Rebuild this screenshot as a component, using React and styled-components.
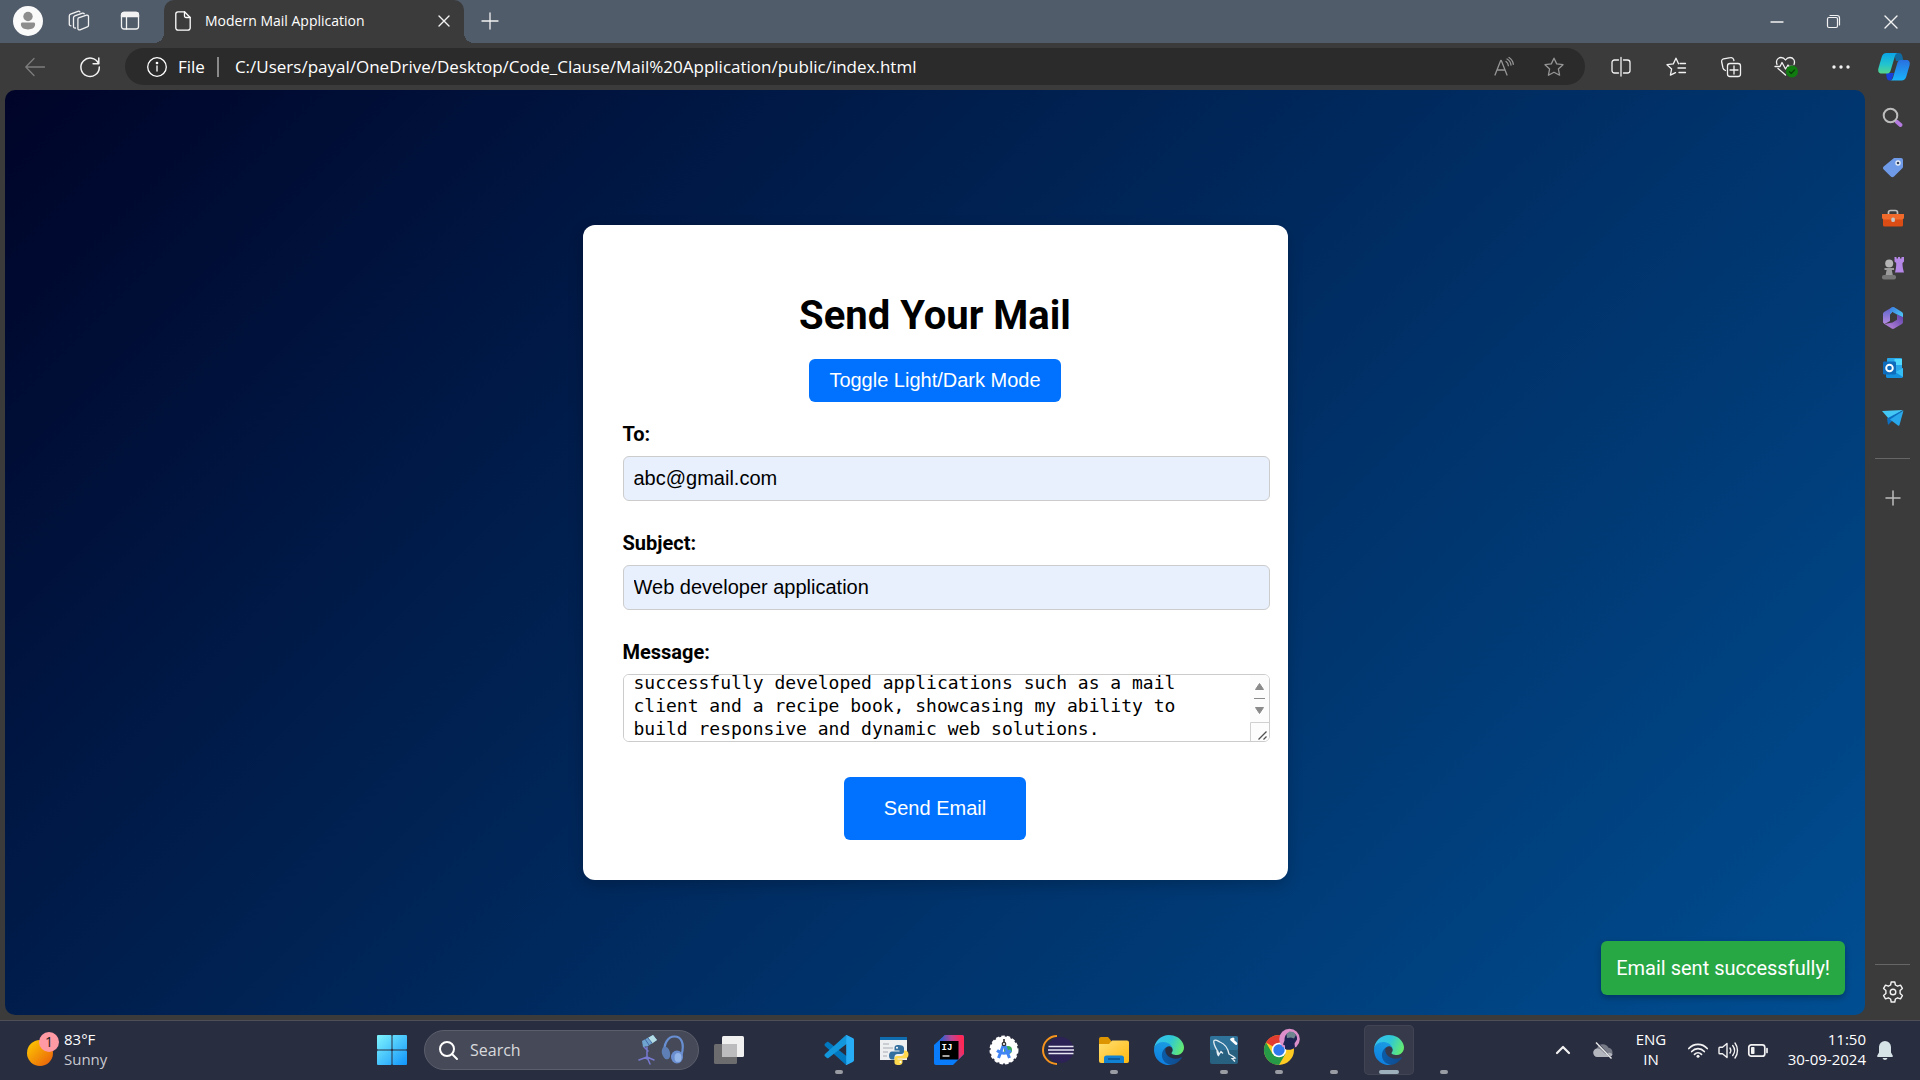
import React, { useEffect, useRef, useState } from "react";
import styled, { createGlobalStyle, css } from "styled-components";

const uiFont = `"Open Sans", "Noto Sans", sans-serif`;
const pageFont = `Roboto, sans-serif`;
const controlFont = `"Liberation Sans", Arial, sans-serif`;

const GlobalStyle = createGlobalStyle`
  *, *::before, *::after { box-sizing: border-box; }
  body { margin: 0; background: #3b3b3b; }
  button { border: 0; padding: 0; background: none; color: inherit; font: inherit; }
  svg { display: block; flex: none; overflow: visible; }
`;

/* ---------- window shell ---------- */

const Desktop = styled.div`
  display: flex;
  flex-direction: column;
  min-height: 100vh;
  font-family: ${uiFont};
  color: #fff;
`;

const TabBar = styled.header`
  display: flex;
  align-items: center;
  height: 43px;
  background: #515c6b;
`;

const TabTools = styled.div`
  display: flex;
  align-items: center;
  width: 164px;
  padding: 0 0 2px 13px;
  gap: 21px;
`;

const IconButton = styled.button`
  display: grid;
  place-items: center;
  flex: none;
  width: ${(p) => p.$w || 30}px;
  height: ${(p) => p.$h || 30}px;
  color: ${(p) => p.$color || "#f2f2f2"};
`;

const Tab = styled.div`
  position: relative;
  display: flex;
  align-items: center;
  width: 300px;
  height: 43px;
  padding: 0 5px 2px 11px;
  border-radius: 10px 10px 0 0;
  background: #3b3b3b;
  &::before,
  &::after {
    content: "";
    position: absolute;
    bottom: 0;
    width: 10px;
    height: 10px;
  }
  &::before {
    right: 100%;
    background: radial-gradient(circle at 0 0, #515c6b 10px, #3b3b3b 10px);
  }
  &::after {
    left: 100%;
    background: radial-gradient(circle at 100% 0, #515c6b 10px, #3b3b3b 10px);
  }
`;

const TabTitle = styled.span`
  flex: 1;
  margin-left: 14px;
  font-size: 14px;
  line-height: 20px;
  white-space: nowrap;
`;

const NewTab = styled(IconButton)`
  margin: 0 0 2px 11px;
`;

const WindowButtons = styled.div`
  display: flex;
  margin-left: auto;
`;

const Toolbar = styled.div`
  display: flex;
  align-items: center;
  height: 47px;
  padding: 0 0 0 7px;
  background: #3b3b3b;
`;

const AddressBar = styled.div`
  display: flex;
  align-items: center;
  flex: 1;
  height: 37px;
  margin-left: 8px;
  padding: 0 6px 0 22px;
  border-radius: 19px;
  background: #2b2b2b;
  font-size: 17px;
  line-height: 24px;
`;

const SchemeLabel = styled.span`
  margin-left: 11px;
  padding-right: 12px;
`;

const AddressInput = styled.input`
  flex: 1;
  min-width: 0;
  height: 24px;
  padding: 0;
  border: 0;
  outline: 0;
  background: none;
  color: #fff;
  font: inherit;
`;

const AddressDivider = styled.span`
  width: 2px;
  height: 20px;
  margin-right: 16px;
  background: #8a8a8a;
`;

const ToolbarActions = styled.div`
  display: flex;
  padding-left: 8px;
`;

const BrowserBody = styled.div`
  display: flex;
  flex: 1;
  padding: 0 0 5px 5px;
  background: #3b3b3b;
`;

const Sidebar = styled.aside`
  display: flex;
  flex-direction: column;
  align-items: center;
  width: 55px;
  padding-top: 3px;
`;

const SideRule = styled.hr`
  width: 35px;
  height: 1px;
  margin: ${(p) => (p.$bottom ? "auto 0 4px" : "15px 0 14px")};
  border: 0;
  background: #666;
`;

/* ---------- mail page ---------- */

const Page = styled.main`
  position: relative;
  display: flex;
  align-items: center;
  justify-content: center;
  flex: 1;
  border-radius: 10px;
  background: linear-gradient(135deg, #000428, #004e92);
  font-family: ${pageFont};
`;

const Card = styled.form`
  display: flex;
  flex-direction: column;
  align-items: center;
  width: 705px;
  padding: 67px 40px 40px;
  border-radius: 12px;
  background: #fff;
  color: #000;
  box-shadow: 0 5px 15px rgba(0, 0, 0, 0.2);
`;

const Title = styled.h1`
  margin: 0 0 20px;
  font-size: 40px;
  line-height: 47px;
  font-weight: 700;
`;

const PrimaryButton = styled.button`
  padding: ${(p) => (p.$large ? "20px 40px" : "10px 20px")};
  border-radius: 6px;
  background: #0072ff;
  color: #fff;
  font-family: ${controlFont};
  font-size: 20px;
  line-height: 23px;
`;

const Fields = styled.div`
  display: flex;
  flex-direction: column;
  gap: 30px;
  width: 100%;
  margin: 20px 0 35px;
`;

const Field = styled.div`
  display: flex;
  flex-direction: column;
  gap: 10px;
`;

const Label = styled.label`
  font-size: 20px;
  line-height: 24px;
  font-weight: 700;
`;

const box = css`
  width: calc(100% + 22px);
  border: 1px solid #ccc;
  border-radius: 6px;
  outline: 0;
  color: #000;
`;

const TextInput = styled.input`
  ${box}
  height: 45px;
  padding: 0 10px;
  background: #e8f0fe;
  font-family: ${controlFont};
  font-size: 20px;
`;

const MessageWrap = styled.div`
  ${box}
  position: relative;
  height: 68px;
  overflow: hidden;
`;

const MessageInput = styled.textarea`
  display: block;
  width: 100%;
  height: 66px;
  padding: 0 30px 1px 10px;
  border: 0;
  outline: 0;
  resize: none;
  overflow: hidden;
  background: #fff;
  color: #000;
  font-family: "DejaVu Sans Mono", monospace;
  font-size: 18px;
  line-height: 23px;
`;

const ScrollTrack = styled.span`
  position: absolute;
  top: 0;
  right: 0;
  bottom: 0;
  width: 19px;
`;

const Toast = styled.div`
  position: absolute;
  right: 20px;
  bottom: 20px;
  padding: 15px;
  border-radius: 6px;
  background: #28a745;
  color: #fff;
  font-size: 20px;
  line-height: 24px;
  box-shadow: 0 3px 6px rgba(0, 0, 0, 0.25);
`;

/* ---------- taskbar ---------- */

const Taskbar = styled.footer`
  display: flex;
  align-items: center;
  height: 60px;
  padding-bottom: 1px;
  border-top: 1px solid #4e4f57;
  background: #292d40;
  font-size: 15px;
  line-height: 20px;
`;

const Weather = styled.button`
  display: flex;
  align-items: center;
  width: 367px;
  padding-left: 27px;
  gap: 5px;
  text-align: left;
`;

const WeatherText = styled.span`
  padding-bottom: 2px;
`;

const Line = styled.span`
  display: block;
  color: ${(p) => (p.$muted ? "#c9cad0" : "#fff")};
`;

const TaskItems = styled.nav`
  display: flex;
  align-items: center;
  gap: 5px;
`;

const TaskButton = styled.button`
  position: relative;
  display: grid;
  place-items: center;
  width: 50px;
  height: 50px;
  border-radius: 5px;
  ${(p) => p.$active && "background: #363a4a; box-shadow: inset 0 0 0 1px #414553;"}
  &::after {
    content: "";
    position: absolute;
    bottom: 1px;
    width: ${(p) => (p.$active ? 20 : 8)}px;
    height: 4px;
    border-radius: 2px;
    background: ${(p) => (p.$active ? "#9fb0bd" : p.$running ? "#9a9ca3" : "transparent")};
  }
`;

const SearchBox = styled.label`
  display: flex;
  align-items: center;
  width: 275px;
  height: 40px;
  margin: 0 0 0 2px;
  padding: 0 13px 0 14px;
  border: 1px solid #5b5f6c;
  border-radius: 20px;
  background: #464a58;
`;

const SearchInput = styled.input`
  flex: 1;
  min-width: 0;
  margin-left: 12px;
  padding: 0;
  border: 0;
  outline: 0;
  background: none;
  color: #d8d9dd;
  font-family: inherit;
  font-size: 16px;
  &::placeholder { color: #d8d9dd; opacity: 1; }
`;

const Tray = styled.div`
  display: flex;
  align-items: center;
  margin-left: auto;
  padding-right: 20px;
`;

const Language = styled.button`
  width: 56px;
  margin-right: 4px;
  padding-bottom: 2px;
  text-align: center;
`;

const Clock = styled.button`
  width: 90px;
  margin: 0 4px 0 3px;
  padding-bottom: 2px;
  text-align: right;
  white-space: nowrap;
`;

/* ---------- icons ---------- */

const Svg = ({ s = 20, w, h, box: vb, children, sw = 1.3 }) => (
  <svg
    width={w || s}
    height={h || s}
    viewBox={vb || `0 0 ${w || s} ${h || s}`}
    fill="none"
    stroke="currentColor"
    strokeWidth={sw}
    strokeLinecap="round"
    strokeLinejoin="round"
    aria-hidden="true"
  >
    {children}
  </svg>
);

const AvatarIcon = () => (
  <Svg s={30}>
    <circle cx="15" cy="15" r="15" fill="#fafafa" stroke="none" />
    <circle cx="15" cy="10.5" r="4.7" fill="#8d8d8d" stroke="none" />
    <path d="M9.5 16.5h11c1 0 1.6.6 1.6 1.6 0 4-3.300 5.400-7.100 5.400S7.900 22.100 7.900 18.100c0-1 .6-1.600 1.600-1.600z" fill="#8d8d8d" stroke="none" />
  </Svg>
);

const WorkspacesIcon = () => (
  <Svg s={22}>
    <path d="M10.500 7.800 18.500 5.200c1-.3 2 .3 2 1.400v8.600c0 .8-.4 1.400-1.200 1.700l-7.300 2.900c-1 .4-2.100-.2-2.100-1.300V9.600c0-.9.100-1.500.6-1.800z" />
    <path d="M7.500 18c-1.200.2-2-.5-2-1.600V7.800c0-.9.500-1.600 1.300-1.900l7.700-2.700c.7-.2 1.400 0 1.800.6" />
    <path d="M3 15.800c-1 0-1.700-.6-1.700-1.600V6c0-.9.500-1.500 1.200-1.800L10 1.300c.8-.3 1.500 0 1.900.6" />
  </Svg>
);

const TabActionsIcon = () => (
  <Svg s={20}>
    <rect x="1.500" y="1.500" width="17" height="16.500" rx="2.500" />
    <path d="M1.500 5.500V4A2.500 2.500 0 0 1 4 1.500h12A2.500 2.500 0 0 1 18.500 4v1.500z" fill="currentColor" />
    <path d="M6.500 6v12" />
  </Svg>
);

const DocIcon = () => (
  <Svg w={16} h={20}>
    <path d="M3 .8h6.500L15.200 6.500V17A2.200 2.200 0 0 1 13 19.200H3A2.200 2.200 0 0 1 .8 17V3A2.200 2.200 0 0 1 3 .8z" />
    <path d="M9.500.8V5c0 .9.600 1.500 1.500 1.500h4.200" />
  </Svg>
);

const CrossIcon = ({ s = 10 }) => (
  <Svg s={s} sw={1.400}>
    <path d={`M0 0L${s} ${s}M${s} 0L0 ${s}`} />
  </Svg>
);

const PlusIcon = ({ s = 16, sw = 1.300 }) => (
  <Svg s={s} sw={sw}>
    <path d={`M${s / 2} 0V${s}M0 ${s / 2}H${s}`} />
  </Svg>
);

const MinimizeIcon = () => (
  <Svg w={12} h={12}><path d="M0 6h12" /></Svg>
);

const RestoreIcon = () => (
  <Svg s={13} sw={1.200}>
    <rect x=".5" y="2.500" width="10" height="10" rx="1.500" />
    <path d="M3 .5h7a2.500 2.500 0 0 1 2.500 2.500v7" />
  </Svg>
);

const BackIcon = () => (
  <Svg s={20}><path d="M19.500 10H.8M9 1.500.8 10 9 18.500" /></Svg>
);

const ReloadIcon = () => (
  <Svg s={20} sw={1.500}>
    <path d="M18.500 6.500A9.200 9.200 0 1 0 19.300 10M18.800 1v5.700h-5.700" />
  </Svg>
);

const InfoIcon = () => (
  <Svg s={20} sw={1.300}>
    <circle cx="10" cy="10" r="9.300" />
    <path d="M10 9v5" />
    <circle cx="10" cy="6" r=".7" fill="currentColor" />
  </Svg>
);

const ReadAloudIcon = () => (
  <Svg s={20}>
    <path d="M1 18 6.700 3.500h.6L13 18M3.200 13h7.600" />
    <path d="M12 4.500c1.400 1 2.200 2.400 2.400 4.200M13 2c2.400 1.300 3.700 3.400 4 6M15 .5c2.500 1.600 4 3.900 4.300 6.800" />
  </Svg>
);

const StarIcon = () => (
  <Svg s={20}>
    <path d="M10 1.200l2.700 5.700 6.300.8-4.600 4.300 1.200 6.200L10 15.200l-5.600 3 1.200-6.200L1 7.700l6.300-.8z" />
  </Svg>
);

const SplitIcon = () => (
  <Svg s={20}>
    <path d="M7.500 3H3.500A2.500 2.500 0 0 0 1 5.500v8A2.500 2.500 0 0 0 3.500 16h4M12.500 3h4A2.500 2.500 0 0 1 19 5.500v8a2.500 2.500 0 0 1-2.500 2.500h-4M10 .5v18.500" />
  </Svg>
);

const FavoritesIcon = () => (
  <Svg s={20}>
    <path d="M12.500 6.800 10 1.200 7.300 6.900 1 7.700l4.600 4.300-1.200 6.200L9.500 15.600" />
    <path d="M14 6.500h5.500M12 11h7.500M13 15.500h6.500" />
  </Svg>
);

const CollectionsIcon = () => (
  <Svg s={20}>
    <path d="M4.500 13.500C3 13 2.300 12.200 2 11L.700 5C.3 3.500 1.200 2.200 2.600 1.900L9.500.7c1.500-.3 2.800.5 3.200 2l.2 1" />
    <rect x="6.500" y="6.500" width="13" height="13" rx="2.500" />
    <path d="M13 9v8M9 13h8" />
  </Svg>
);

const EssentialsIcon = () => (
  <Svg s={22}>
    <path d="M2 8.500C.4 4.500 3 1.500 6 1.500c2 0 3.500 1 4.500 2.500C11.500 2.500 13 1.500 15 1.500c3 0 5.600 3 4 7M3 12.500l7.500 6.500" />
    <path d="M0 10.500h5l2-4 3.500 6.500 2.500-4 1 1.500h4" />
    <circle cx="17" cy="15.500" r="6" fill="#107c10" stroke="none" />
    <path d="M14.500 15.700l1.700 1.800 3.300-3.500" stroke="#0a3d0a" />
  </Svg>
);

const DotsIcon = () => (
  <Svg w={18} h={4}>
    <g fill="currentColor" stroke="none">
      <circle cx="2" cy="2" r="1.700" /><circle cx="9" cy="2" r="1.700" /><circle cx="16" cy="2" r="1.700" />
    </g>
  </Svg>
);

const CopilotIcon = () => (
  <svg width="32" height="28" viewBox="0 0 32 28" aria-hidden="true">
    <defs>
      <linearGradient id="cpA" x1="0" y1="0" x2="0" y2="1">
        <stop offset="0" stopColor="#0aa5e8" /><stop offset=".55" stopColor="#22c3cf" /><stop offset="1" stopColor="#55d68b" />
      </linearGradient>
      <linearGradient id="cpB" x1="0" y1="0" x2="0" y2="1">
        <stop offset="0" stopColor="#2a6fe0" /><stop offset="1" stopColor="#18b4fb" />
      </linearGradient>
    </defs>
    <path d="M16 0h5c2 0 2.800 1.500 3.400 3.500L25.500 8H18z" fill="#116aa0" />
    <path d="M8 20h8l-2 6c-.5 1-1.500 1.500-2.500 1.500-2 0-2.500-1.500-3-3.500z" fill="#1741d8" />
    <path d="M8.500 0H20c-1.800 0-2.600 1.500-3.200 3.500l-4 13.500c-.6 2-1.500 3.500-3.500 3.500H3.500C.5 20.500-.3 18 .5 15L3.700 4C4.500 1.500 6 0 8.500 0z" fill="url(#cpA)" />
    <path d="M23.500 27.500H12c1.800 0 2.600-1.500 3.200-3.500l4-13.500c.6-2 1.500-3.500 3.500-3.500h5.800c3 0 3.800 2.500 3 5.500l-3.200 11c-.8 2.500-2.300 4-4.800 4z" fill="url(#cpB)" />
  </svg>
);

const sideIcons = [
  ["Search", (
    <svg width="22" height="22" viewBox="0 0 22 22">
      <path d="M14.500 14.500l4 3.500" stroke="#b57be0" strokeWidth="4" strokeLinecap="round" />
      <circle cx="8.500" cy="8.500" r="6.800" fill="none" stroke="#bdbdbd" strokeWidth="2" />
    </svg>
  )],
  ["Shopping", (
    <svg width="22" height="22" viewBox="0 0 22 22">
      <path d="M12 1h7a2 2 0 0 1 2 2v6.500c0 .8-.2 1.300-.7 1.800L12 19.600c-1 1-2.200 1-3.200 0L1.700 12.500c-1-1-1-2 0-3z" fill="#6f9ae8" />
      <circle cx="16" cy="6" r="2.700" fill="#e8eef8" /><circle cx="16" cy="6" r="1.300" fill="#34415e" />
    </svg>
  )],
  ["Tools", (
    <svg width="22" height="18" viewBox="0 0 22 18">
      <path d="M6.500 6V3.500a2 2 0 0 1 2-2h5a2 2 0 0 1 2 2V6" fill="none" stroke="#bdbdbd" strokeWidth="1.700" />
      <rect x="1" y="6" width="20" height="11.500" rx="1.500" fill="#dc4d16" />
      <path d="M0 5h22v3.500c0 1-1 2-2 2H2c-1 0-2-1-2-2z" fill="#f06a2b" />
      <rect x="9.300" y="8.500" width="3.600" height="4.500" rx="1.500" fill="#c5c5c5" />
    </svg>
  )],
  ["Games", (
    <svg width="22" height="23" viewBox="0 0 22 23">
      <path d="M12.500 0h2v1.500H16V0h2v1.500h1.500V0H22v4.500l-1.500 1.500c0 3 .3 5.500 1.500 9.500h-9c1-4 1.300-6.500 1.200-9.500l-1.700-1.500z" fill="#b588e8" />
      <circle cx="7.200" cy="6.500" r="4" fill="#b5b5b5" />
      <path d="M2.500 11h9.500v2H9.800l1 5H3.600l1-5H2.500z" fill="#9c9c9c" />
      <rect x="0" y="18" width="14" height="4.500" rx="2" fill="#777" />
    </svg>
  )],
  ["Microsoft 365", (
    <svg width="20" height="22" viewBox="0 0 20 22">
      <defs>
        <linearGradient id="m3a" x1="0" y1="0" x2="0" y2="1"><stop offset="0" stopColor="#5a63c8" /><stop offset="1" stopColor="#b48be0" /></linearGradient>
        <linearGradient id="m3b" x1="0" y1="0" x2="1" y2="1"><stop offset="0" stopColor="#3a7be0" /><stop offset="1" stopColor="#4fd0f5" /></linearGradient>
        <linearGradient id="m3c" x1="1" y1="0" x2="0" y2="1"><stop offset="0" stopColor="#5a3fa8" /><stop offset="1" stopColor="#c08be0" /></linearGradient>
      </defs>
      <path d="M9 .3 1.500 4.700C.5 5.300 0 6 0 7v8.500l1.500 1.500L7 14V7l2-1.200z" fill="url(#m3a)" />
      <path d="M9 .3c.7-.4 1.500-.4 2.200 0l7.300 4.400c1 .6 1.500 1.300 1.500 2.300v4L14 7.500l-5-2.700-2 3V2z" fill="url(#m3b)" />
      <path d="M20 9v6c0 1-.5 1.700-1.500 2.300l-7.300 4.300c-.8.500-1.700.5-2.500 0L1.500 17l8-1.500 4.500-2.700V7.500L20 10z" fill="url(#m3c)" />
    </svg>
  )],
  ["Outlook", (
    <svg width="20" height="20" viewBox="0 0 20 20">
      <rect x="4" y="0" width="15" height="13" rx="1" fill="#28a8ea" /><rect x="11.500" y="1" width="7.500" height="6" fill="#50d9ff" />
      <path d="M3 10l9 4 8-4v8.500c0 .8-.7 1.500-1.500 1.500h-14C3.700 20 3 19.300 3 18.500z" fill="#1490df" /><path d="M20 10v9L12 14z" fill="#35bdf5" />
      <rect x="0" y="3.500" width="13" height="13" rx="1.200" fill="#0f6cbd" />
      <circle cx="6.500" cy="10" r="3.300" fill="none" stroke="#fff" strokeWidth="1.900" />
    </svg>
  )],
  ["Drop", (
    <svg width="22" height="16" viewBox="0 0 22 16">
      <path d="M0 1 21 0 7 9z" fill="#43c7f4" /><path d="M21 0 5 8.500l1 6.500z" fill="#0c6fc0" />
      <path d="M21.500.5 8 9.500l8 6c.8.500 1.200.3 1.500-.5z" fill="#28a8ea" />
    </svg>
  )],
];

const GearIcon = () => (
  <Svg s={22} box="0 0 22 22" sw={1.400}>
    <path d="M9.200 1h3.600l.6 3 2.200 1.200 2.900-1 1.900 3.200L18.100 9.500v3l2.300 2.100-1.900 3.200-2.900-1-2.200 1.200-.6 3H9.200l-.6-3-2.200-1.200-2.900 1-1.900-3.200 2.300-2.100v-3L1.600 7.400l1.900-3.200 2.900 1L8.600 4z" />
    <circle cx="11" cy="11" r="2.800" />
  </Svg>
);

const SunIcon = () => (
  <svg width="32" height="34" viewBox="0 0 32 34" aria-hidden="true">
    <defs>
      <linearGradient id="sun" x1="0" y1="0" x2="1" y2="1">
        <stop offset="0" stopColor="#ffd000" /><stop offset="1" stopColor="#e8590c" />
      </linearGradient>
    </defs>
    <circle cx="13" cy="20" r="13" fill="url(#sun)" />
    <circle cx="22" cy="9" r="10" fill="#ff99a4" />
    <text x="22" y="14" textAnchor="middle" fontSize="14" fill="#1b1b1b" fontFamily="Open Sans, sans-serif">1</text>
  </svg>
);

const StartIcon = () => (
  <svg width="30" height="30" viewBox="0 0 30 30" aria-hidden="true">
    <defs>
      <linearGradient id="win" gradientUnits="userSpaceOnUse" x1="0" y1="0" x2="30" y2="30">
        <stop offset="0" stopColor="#7ff4fd" /><stop offset="1" stopColor="#1094fb" />
      </linearGradient>
    </defs>
    <g fill="url(#win)">
      <rect x="0" y="0" width="14.500" height="14.500" rx="1" /><rect x="15.500" y="0" width="14.500" height="14.500" rx="1" />
      <rect x="0" y="15.500" width="14.500" height="14.500" rx="1" /><rect x="15.500" y="15.500" width="14.500" height="14.500" rx="1" />
    </g>
  </svg>
);

const MagnifierIcon = () => (
  <Svg s={19} sw={2}><circle cx="8" cy="8" r="7" /><path d="M13 13l5 5" /></Svg>
);

const PodcastIcon = () => (
  <svg width="48" height="30" viewBox="0 0 48 30" aria-hidden="true">
    <path d="M10 12v12M10 22l-8 3M10 22l7 3M10 22l3 7M7 12l4 4" stroke="#7779d0" strokeWidth="1.500" fill="none" strokeLinecap="round" />
    <path d="M5 6 16 0l4 5-9 6-5 1z" fill="#6fa3d0" /><path d="M11 3 16 0l4 5-5 3.500z" fill="#b2dce6" />
    <path d="M8 4l4 6M11 3l4 5" stroke="#4469a5" />
    <path d="M28 18C26 9 31 1.500 37.500 1.500S48 8 44.500 20" stroke="#678fd2" strokeWidth="2.200" fill="none" />
    <ellipse cx="29" cy="18" rx="4" ry="6.500" fill="#5e7fb5" transform="rotate(-15 29 18)" />
    <ellipse cx="40" cy="22" rx="6" ry="6.500" fill="#6b8ed0" /><ellipse cx="41" cy="22.500" rx="3.500" ry="4.500" fill="#93b4e6" />
  </svg>
);

const TaskViewIcon = () => (
  <svg width="30" height="28" viewBox="0 0 30 28" aria-hidden="true">
    <rect x="0" y="8" width="23" height="20" rx="1.500" fill="#6c6c6e" />
    <rect x="8" y="0" width="22" height="21" rx="1.500" fill="#f0f0f1" />
    <path d="M8 8h15v13H9.500A1.500 1.500 0 0 1 8 19.500z" fill="#bcbcbe" />
  </svg>
);

const VsCodeIcon = () => (
  <svg width="30" height="30" viewBox="0 0 30 30" aria-hidden="true">
    <path d="M1.200 8.500 3 7c.5-.4 1-.4 1.500 0L25 23l-3.500 6.500L1 11c-.8-.8-.6-1.800.2-2.500z" fill="#0078c0" />
    <path d="M1.200 21.500 3 23c.5.400 1 .4 1.500 0L25 7 21.500.5 1 19c-.8.800-.6 1.800.2 2.500z" fill="#1296dc" />
    <path d="M21.500.3c.5-.3 1-.3 1.600 0L28.700 3c.9.400 1.300 1 1.300 1.900v20.200c0 .9-.4 1.500-1.300 1.900l-5.600 2.700c-.6.300-1.100.3-1.600 0 .5-.2.700-.7.700-1.400V1.700c0-.7-.2-1.200-.7-1.400z" fill="#27adf5" />
  </svg>
);

const PythonIdleIcon = () => (
  <svg width="30" height="30" viewBox="0 0 30 30" aria-hidden="true">
    <rect x="1" y="2" width="27" height="23" fill="#edeff0" /><rect x="1" y="2" width="27" height="3" fill="#0f6cae" />
    <path d="M4 9h6M4 13h10M4 17h5M4 21h4" stroke="#bfc4c8" strokeWidth="1.300" />
    <path d="M19.500 10c-3.500 0-4 1.500-4 3v2.500h5v1H13c-2 0-3 1.800-3 4.200 0 2.300 1 3.800 3 3.800h2.500v-2.500c0-2 1.500-3 3-3h4c1.700 0 2.500-1 2.500-2.500V13c0-2-2-3-5.500-3z" fill="#34709f" />
    <circle cx="18" cy="12.700" r="1" fill="#fff" />
    <path d="M19.500 30c3.500 0 4-1.500 4-3v-2.500h-5v-1h7.500c2 0 3.500-1.500 3.500-4s-1.500-4-3.500-4h-1v2.500c0 2-1.500 3-3 3h-4c-1.700 0-2.500 1-2.500 2.500V27c0 2 .5 3 4 3z" fill="#ffd94d" />
    <circle cx="21.500" cy="27" r="1" fill="#fff" />
  </svg>
);

const IntelliJIcon = () => (
  <svg width="30" height="30" viewBox="0 0 30 30" aria-hidden="true">
    <defs>
      <linearGradient id="ij" gradientUnits="userSpaceOnUse" x1="9" y1="8" x2="27" y2="4">
        <stop offset="0" stopColor="#3d5cc8" /><stop offset=".5" stopColor="#b94694" /><stop offset="1" stopColor="#fe2857" />
      </linearGradient>
    </defs>
    <path d="M11 0h17a2 2 0 0 1 2 2v17L19 30H2a2 2 0 0 1-2-2V10z" fill="#087cfa" />
    <path d="M11 0h17a2 2 0 0 1 2 2v17l-6 6V6H5z" fill="url(#ij)" />
    <rect x="6" y="6" width="18.500" height="18.500" fill="#000" />
    <text x="7.500" y="14.500" fontSize="9" fontWeight="700" fontFamily="Liberation Mono, monospace" fill="#fff">IJ</text>
    <path d="M8.500 21h7" stroke="#fff" strokeWidth="1.300" />
  </svg>
);

const AndroidStudioIcon = () => (
  <svg width="30" height="30" viewBox="0 0 30 30" aria-hidden="true">
    <circle cx="15" cy="15" r="13.500" fill="#fff" stroke="#fff" strokeWidth="2" strokeDasharray="3.500 2" />
    <circle cx="19" cy="15" r="4" fill="#34a853" />
    <path d="M15 8.500 9.500 23M15 8.500 20.500 23M8 15.500c4.500 3.500 9.500 3.500 14 0" stroke="#4285f4" strokeWidth="3" fill="none" />
    <path d="M15 4v5" stroke="#555" strokeWidth="2" /><circle cx="15" cy="9" r="1.700" fill="#fff" stroke="#333" strokeWidth="1.300" />
  </svg>
);

const EclipseIcon = () => (
  <svg width="30" height="30" viewBox="0 0 30 30" aria-hidden="true">
    <path d="M13 1A14 14 0 0 0 13 29" stroke="#f7941e" strokeWidth="2" fill="none" />
    <circle cx="16.500" cy="15" r="13" fill="#2c2255" />
    <path d="M4.500 11.500h25M4 15h26M4.500 18.500h25" stroke="#e8e6f2" strokeWidth="1.700" />
  </svg>
);

const FolderIcon = () => (
  <svg width="30" height="26" viewBox="0 0 30 26" aria-hidden="true">
    <defs>
      <linearGradient id="fold" x1="0" y1="0" x2="1" y2="1">
        <stop offset="0" stopColor="#ffdf73" /><stop offset="1" stopColor="#ffb90f" />
      </linearGradient>
    </defs>
    <path d="M0 2a2 2 0 0 1 2-2h7l3 3.500V9H0z" fill="#dc9500" />
    <path d="M0 7h10l3-3.500h15a2 2 0 0 1 2 2V24a2 2 0 0 1-2 2H2a2 2 0 0 1-2-2z" fill="url(#fold)" />
    <path d="M5 26v-5a2.500 2.500 0 0 1 2.500-2.500h15A2.500 2.500 0 0 1 25 21v5z" fill="#1182d2" /><path d="M9 22h12" stroke="#084f8a" strokeWidth="1.500" />
  </svg>
);

const EdgeIcon = ({ id }) => (
  <svg width="30" height="30" viewBox="0 0 256 256" aria-hidden="true">
    <defs>
      <linearGradient id={`${id}a`} x1=".2" y1=".5" x2="1" y2=".5"><stop offset="0" stopColor="#0c59a4" /><stop offset="1" stopColor="#114a8b" /></linearGradient>
      <linearGradient id={`${id}b`} x1=".6" y1="0" x2=".3" y2="1"><stop offset="0" stopColor="#1b9de2" /><stop offset="1" stopColor="#0d7de0" /></linearGradient>
      <linearGradient id={`${id}c`} x1="0" y1=".3" x2="1" y2=".6"><stop offset="0" stopColor="#35c1f1" /><stop offset=".5" stopColor="#2fc7d7" /><stop offset="1" stopColor="#66eb6e" /></linearGradient>
    </defs>
    <path d="M231 190.500c-3.400 1.800-6.900 3.400-10.500 4.700-11.500 4.300-23.600 6.500-35.900 6.500-47.300 0-88.500-32.500-88.500-74.300 0-11.400 6.400-21.900 16.400-27.300-42.800 1.800-53.800 46.400-53.800 72.500 0 73.900 68.100 81.400 82.800 81.400 7.900 0 19.800-2.300 27-4.600l1.300-.4c27.600-9.500 51-28.100 66.600-52.800 1.200-1.900.6-4.300-1.200-5.500-1.300-.8-2.900-.9-4.200-.2z" fill={`url(#${id}a)`} />
    <path d="M105.700 241.400c-8.900-5.500-16.600-12.800-22.700-21.300-26.300-36-18.400-86.500 17.600-112.800 3.800-2.700 7.700-5.200 11.900-7.200 3.100-1.500 8.400-4.100 15.500-4 10.100.1 19.600 4.900 25.700 13 4 5.400 6.300 11.900 6.400 18.700 0-.2 24.500-79.600-80-79.600-43.900 0-80 41.700-80 78.200-.2 19.300 4 38.500 12.100 56 27.600 58.800 94.800 87.600 156.400 67.100-21.100 6.600-44.100 3.700-62.900-8.100z" fill={`url(#${id}b)`} />
    <path d="M152.300 148.900c-.9 1-3.400 2.500-3.400 5.600 0 2.600 1.700 5.200 4.800 7.300 14.300 10 41.400 8.600 41.500 8.600 10.700 0 21.100-2.900 30.300-8.300 18.800-11 30.400-31.100 30.400-52.900.3-22.400-8-37.300-11.300-43.900C223.500 23.900 177.700 0 128 0 58 0 1 56.200 0 126.200c.5-36.500 36.800-66 80-66 3.500 0 23.500.3 42 10.100 16.300 8.600 24.900 18.900 30.800 29.200 6.200 10.700 7.300 24.100 7.300 29.500 0 5.300-2.700 13.300-7.800 19.900z" fill={`url(#${id}c)`} />
  </svg>
);

const MySqlIcon = () => (
  <svg width="30" height="30" viewBox="0 0 30 30" aria-hidden="true">
    <rect x="1" y="1" width="28" height="28" rx="2" fill="#286180" />
    <rect x="1" y="1" width="28" height="14" rx="2" fill="#30739a" />
    <path d="M10 21c-2-1-2-4-2-6-2-3-4-8-3-9.500C6.500 4 9 6 11 7c5 2 8 7 9 12 2 1 4 2 6 4l-3 .500 3 3M8.500 15.500l1.500 4 2-3 2 2" stroke="#e5eef3" strokeWidth="1.300" fill="none" />
    <path d="M22.500 4.500l4.500 4" stroke="#fff" strokeWidth="2.700" strokeLinecap="round" /><circle cx="24" cy="4" r="1.500" fill="#fff" />
  </svg>
);

const ChromeIcon = () => (
  <svg width="30" height="30" viewBox="0 0 30 30" aria-hidden="true">
    <circle cx="15" cy="15" r="15" fill="#ffca22" />
    <path d="M15 15 2 7.500A15 15 0 0 1 28 7.500H15z" fill="#e23c31" />
    <path d="M2 7.500A15 15 0 0 0 15 30l6.500-11.300L15 15 8.500 18.700z" fill="#279a48" />
    <circle cx="15" cy="15" r="7.300" fill="#fff" /><circle cx="15" cy="15" r="5.700" fill="#3079ec" />
    <circle cx="25.500" cy="4" r="10.300" fill="#dc8fcb" />
    <path d="M21 14V10.500l-2-1 1.500-4C20.500 0 23-2.500 27-2.500c4 0 6.500 3 6 7l-2.500 4 .5 4c-3 2.500-7 3-10 1.500z" fill="#1e2452" />
    <path d="M22.500-1l3-2.500 4 .5 2.500 3-2 3.500-3-1-4 .5z" fill="#6e8590" />
  </svg>
);

const ChevronIcon = () => (
  <Svg w={14} h={8} sw={2.200}><path d="M1 7l6-6 6 6" /></Svg>
);

const CloudOffIcon = () => (
  <svg width="21" height="17" viewBox="0 0 21 17" aria-hidden="true">
    <path d="M4.500 15a4.300 4.300 0 0 1-.6-8.500A6.300 6.300 0 0 1 15.500 5.800 4.700 4.700 0 0 1 16 15z" fill="#767a86" />
    <path d="M4.500 15a4.200 4.200 0 0 1 0-8.400c3.500 0 5 3.400 8 5.400 2.500-1.800 5-1.500 7 .3-.6 1.700-1.900 2.700-3.500 2.700z" fill="#b4b6bd" />
    <path d="M4.500 1l14 15.500" stroke="#292d40" strokeWidth="1.500" /><path d="M3 .5l15.500 16" stroke="#e8e8ea" strokeWidth="1.400" />
  </svg>
);

const WifiIcon = () => (
  <Svg w={20} h={15} sw={1.700}>
    <path d="M.8 5.500c5-5.500 13.400-5.500 18.400 0M3.700 8.500c3.500-3.800 9.100-3.800 12.600 0M6.500 11.300c2-2 5-2 7 0" />
    <circle cx="10" cy="13.300" r="1.500" fill="currentColor" stroke="none" />
  </Svg>
);

const VolumeIcon = () => (
  <Svg w={20} h={17} sw={1.400}>
    <path d="M1 6v5c0 .5.300.8.800.8h2.700L9 15.500v-14L4.500 5.200H1.800C1.300 5.200 1 5.500 1 6z" />
    <path d="M12 6c1 1.500 1 3.500 0 5M14.700 3.500c2.300 3 2.300 7 0 10M17 1c3.300 4.500 3.300 10.500 0 15" />
  </Svg>
);

const BatteryIcon = () => (
  <Svg w={20} h={13} sw={1.700}>
    <rect x=".8" y=".8" width="16" height="11.400" rx="2.500" />
    <path d="M19 4.500v4" /><rect x="3" y="3" width="3.500" height="7" rx=".8" fill="currentColor" stroke="none" />
  </Svg>
);

const BellIcon = () => (
  <svg width="16" height="19" viewBox="0 0 16 19" aria-hidden="true">
    <path d="M8 0a6 6 0 0 0-6 6v5.500L.3 14.500c-.4.900 0 1.500.9 1.500h13.600c.9 0 1.300-.6.900-1.500L14 11.500V6a6 6 0 0 0-6-6z" fill="#d5e2e6" />
    <path d="M5.500 17h5c-.5 1.300-1.300 2-2.500 2s-2-.7-2.500-2z" fill="#d5e2e6" />
  </svg>
);

const ScrollbarArt = () => (
  <svg width="19" height="66" viewBox="0 0 19 66" aria-hidden="true">
    <rect width="19" height="66" fill="#fcfcfc" />
    <path d="M9.500 8.500 13.500 14.500H5.500z" fill="#8a8a8a" stroke="#8a8a8a" strokeLinejoin="round" />
    <path d="M4 23.500h11" stroke="#8a8a8a" />
    <path d="M9.500 38.500 13.500 32.500H5.500z" fill="#8a8a8a" stroke="#8a8a8a" strokeLinejoin="round" />
    <path d="M.5 66V47.500H19" fill="none" stroke="#d0d0d0" />
    <path d="M8.500 64.500l8-8M13.500 64.500l3-3" stroke="#505050" strokeWidth="1.300" />
  </svg>
);

/* ---------- data ---------- */

const message =
  "successfully developed applications such as a mail\nclient and a recipe book, showcasing my ability to\nbuild responsive and dynamic web solutions.";

const toolbarIcons = [
  { name: "Split screen", icon: <SplitIcon /> },
  { name: "Favorites", icon: <FavoritesIcon /> },
  { name: "Collections", icon: <CollectionsIcon /> },
  { name: "Browser essentials", icon: <EssentialsIcon /> },
  { name: "Settings and more", icon: <DotsIcon /> },
  { name: "Copilot", icon: <CopilotIcon />, width: 52 },
];

const taskApps = [
  { name: "Task view", icon: <TaskViewIcon /> },
  { name: "Pinned app" },
  { name: "Visual Studio Code", icon: <VsCodeIcon />, running: true },
  { name: "IDLE", icon: <PythonIdleIcon /> },
  { name: "IntelliJ IDEA", icon: <IntelliJIcon /> },
  { name: "Android Studio", icon: <AndroidStudioIcon /> },
  { name: "Eclipse", icon: <EclipseIcon /> },
  { name: "File Explorer", icon: <FolderIcon />, running: true },
  { name: "Edge", icon: <EdgeIcon id="e1" /> },
  { name: "MySQL Workbench", icon: <MySqlIcon />, running: true },
  { name: "Chrome", icon: <ChromeIcon />, running: true },
  { name: "Background app", running: true },
  { name: "Edge window", icon: <EdgeIcon id="e2" />, active: true },
  { name: "Background app 2", running: true },
];

/* ---------- parts ---------- */

function BrowserChrome() {
  return (
    <>
      <TabBar>
        <TabTools>
          <IconButton aria-label="Profile"><AvatarIcon /></IconButton>
          <IconButton aria-label="Workspaces"><WorkspacesIcon /></IconButton>
          <IconButton aria-label="Tab actions"><TabActionsIcon /></IconButton>
        </TabTools>
        <Tab>
          <DocIcon />
          <TabTitle>Modern Mail Application</TabTitle>
          <IconButton aria-label="Close tab"><CrossIcon /></IconButton>
        </Tab>
        <NewTab aria-label="New tab"><PlusIcon /></NewTab>
        <WindowButtons>
          <IconButton $w={57} aria-label="Minimize"><MinimizeIcon /></IconButton>
          <IconButton $w={57} aria-label="Restore"><RestoreIcon /></IconButton>
          <IconButton $w={58} aria-label="Close"><CrossIcon s={12} /></IconButton>
        </WindowButtons>
      </TabBar>
      <Toolbar>
        <IconButton $w={55} $color="#7d7d7d" aria-label="Back"><BackIcon /></IconButton>
        <IconButton $w={55} aria-label="Reload"><ReloadIcon /></IconButton>
        <AddressBar>
          <InfoIcon />
          <SchemeLabel>File</SchemeLabel>
          <AddressDivider />
          <AddressInput
            aria-label="Address"
            defaultValue="C:/Users/payal/OneDrive/Desktop/Code_Clause/Mail%20Application/public/index.html"
          />
          <IconButton $w={50} $color="#969696" aria-label="Read aloud"><ReadAloudIcon /></IconButton>
          <IconButton $w={50} $color="#969696" aria-label="Add to favorites"><StarIcon /></IconButton>
        </AddressBar>
        <ToolbarActions>
          {toolbarIcons.map(({ name, icon, width = 55 }) => (
            <IconButton key={name} $w={width} aria-label={name}>{icon}</IconButton>
          ))}
        </ToolbarActions>
      </Toolbar>
    </>
  );
}

function MailForm({ onSent }) {
  const messageRef = useRef(null);
  useEffect(() => {
    messageRef.current.scrollTop = messageRef.current.scrollHeight;
  }, []);
  return (
    <Card
      onSubmit={(e) => {
        e.preventDefault();
        onSent();
      }}
    >
      <Title>Send Your Mail</Title>
      <PrimaryButton type="button">Toggle Light/Dark Mode</PrimaryButton>
      <Fields>
        <Field>
          <Label htmlFor="to">To:</Label>
          <TextInput id="to" type="email" defaultValue="abc@gmail.com" />
        </Field>
        <Field>
          <Label htmlFor="subject">Subject:</Label>
          <TextInput id="subject" type="text" defaultValue="Web developer application" />
        </Field>
        <Field>
          <Label htmlFor="message">Message:</Label>
          <MessageWrap>
            <MessageInput id="message" ref={messageRef} spellCheck={false} defaultValue={message} />
            <ScrollTrack><ScrollbarArt /></ScrollTrack>
          </MessageWrap>
        </Field>
      </Fields>
      <PrimaryButton $large type="submit">Send Email</PrimaryButton>
    </Card>
  );
}

function WindowsTaskbar() {
  return (
    <Taskbar>
      <Weather>
        <SunIcon />
        <WeatherText>
          <Line>83°F</Line>
          <Line $muted>Sunny</Line>
        </WeatherText>
      </Weather>
      <TaskItems>
        <TaskButton aria-label="Start"><StartIcon /></TaskButton>
        <SearchBox>
          <MagnifierIcon />
          <SearchInput type="text" placeholder="Search" aria-label="Search" />
          <PodcastIcon />
        </SearchBox>
        {taskApps.map((app) => (
          <TaskButton key={app.name} aria-label={app.name} $running={app.running} $active={app.active}>
            {app.icon}
          </TaskButton>
        ))}
      </TaskItems>
      <Tray>
        <IconButton $w={40} aria-label="Show hidden icons"><ChevronIcon /></IconButton>
        <IconButton $w={40} aria-label="OneDrive"><CloudOffIcon /></IconButton>
        <Language>
          <Line>ENG</Line>
          <Line>IN</Line>
        </Language>
        <IconButton $w={30} aria-label="Network"><WifiIcon /></IconButton>
        <IconButton $w={30} aria-label="Volume"><VolumeIcon /></IconButton>
        <IconButton $w={30} aria-label="Battery"><BatteryIcon /></IconButton>
        <Clock>
          <Line>11:50</Line>
          <Line>30-09-2024</Line>
        </Clock>
        <IconButton $w={30} aria-label="Notifications"><BellIcon /></IconButton>
      </Tray>
    </Taskbar>
  );
}

export default function App() {
  const [sent, setSent] = useState(true);
  return (
    <Desktop>
      <GlobalStyle />
      <BrowserChrome />
      <BrowserBody>
        <Page>
          <MailForm onSent={() => setSent(true)} />
          {sent && <Toast role="status">Email sent successfully!</Toast>}
        </Page>
        <Sidebar>
          {sideIcons.map(([name, icon]) => (
            <IconButton key={name} $w={50} $h={50} aria-label={name}>{icon}</IconButton>
          ))}
          <SideRule />
          <IconButton $w={50} $h={50} $color="#bdbdbd" aria-label="Customize"><PlusIcon s={14} sw={1.500} /></IconButton>
          <SideRule $bottom />
          <IconButton $w={50} $h={46} aria-label="Sidebar settings"><GearIcon /></IconButton>
        </Sidebar>
      </BrowserBody>
      <WindowsTaskbar />
    </Desktop>
  );
}
